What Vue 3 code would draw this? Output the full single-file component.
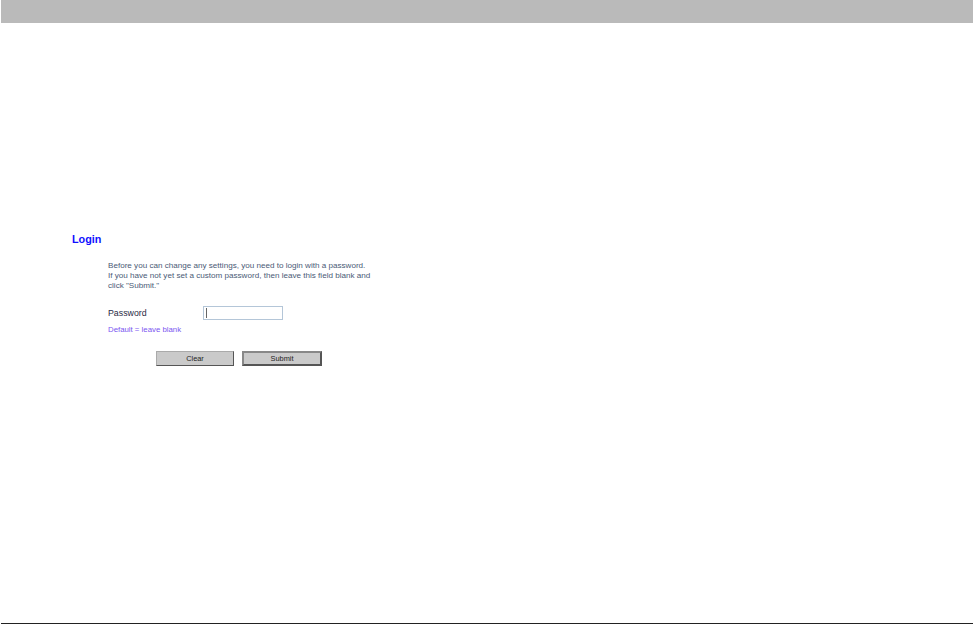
<script setup>
const intro = [
  'Before you can change any settings, you need to login with a password.',
  'If you have not yet set a custom password, then leave this field blank and',
  'click "Submit."'
]
</script>

<template>
  <div class="page">
    <div class="bar"></div>
    <main class="main">
      <h1 class="title">Login</h1>
      <div class="content">
        <p class="intro"><span v-for="l in intro" :key="l" class="line">{{ l }}</span></p>
        <div class="row">
          <label class="label" for="pw">Password</label>
          <div class="inputbox" id="pw"><span class="caret"></span></div>
        </div>
        <p class="hint">Default = leave blank</p>
        <div class="buttons">
          <button class="btn">Clear</button>
          <button class="btn primary">Submit</button>
        </div>
      </div>
    </main>
    <div class="foot"></div>
  </div>
</template>

<style scoped>
.page {
  width: 973px;
  height: 624px;
  display: flex;
  flex-direction: column;
  background: #fff;
  font-family: "Liberation Sans", Arial, sans-serif;
  overflow: hidden;
}
.bar {
  height: 23px;
  margin-left: 1px;
  background: #bababa;
  flex: none;
}
.main {
  flex: 1;
  padding: 210px 0 0 72px;
}
.title {
  margin: 0;
  font-size: 10.8px;
  line-height: 13px;
  font-weight: 700;
  color: #0f0fff;
}
.content {
  padding: 15px 0 0 36px;
}
.intro {
  margin: 0;
  font-size: 8.1px;
  line-height: 10px;
  color: #4a5a76;
}
.line { display: block; white-space: nowrap; }
.row {
  display: flex;
  align-items: center;
  margin-top: 15px;
}
.label {
  width: 95px;
  font-size: 8.8px;
  color: #2a2a44;
}
.inputbox {
  width: 76px;
  height: 12px;
  border: 1px solid #b4c6d8;
  display: flex;
  align-items: center;
  padding-left: 2px;
  box-sizing: content-box;
}
.caret {
  width: 1px;
  height: 10px;
  background: #666;
}
.hint {
  margin: 5px 0 0;
  font-size: 7.8px;
  line-height: 10px;
  color: #7a55f0;
}
.buttons {
  display: flex;
  gap: 8px;
  margin: 16px 0 0 48px;
}
.btn {
  width: 78px;
  height: 15px;
  padding: 0;
  background: #cacaca;
  border: 1px solid;
  border-color: #aaa #555 #555 #aaa;
  font-family: inherit;
  font-size: 7.4px;
  color: #222;
}
.btn.primary {
  width: 80px;
  border: 2px solid;
  border-color: #888 #555 #555 #888;
}
.foot {
  height: 1px;
  margin-left: 1px;
  background: #222;
  flex: none;
}
</style>
